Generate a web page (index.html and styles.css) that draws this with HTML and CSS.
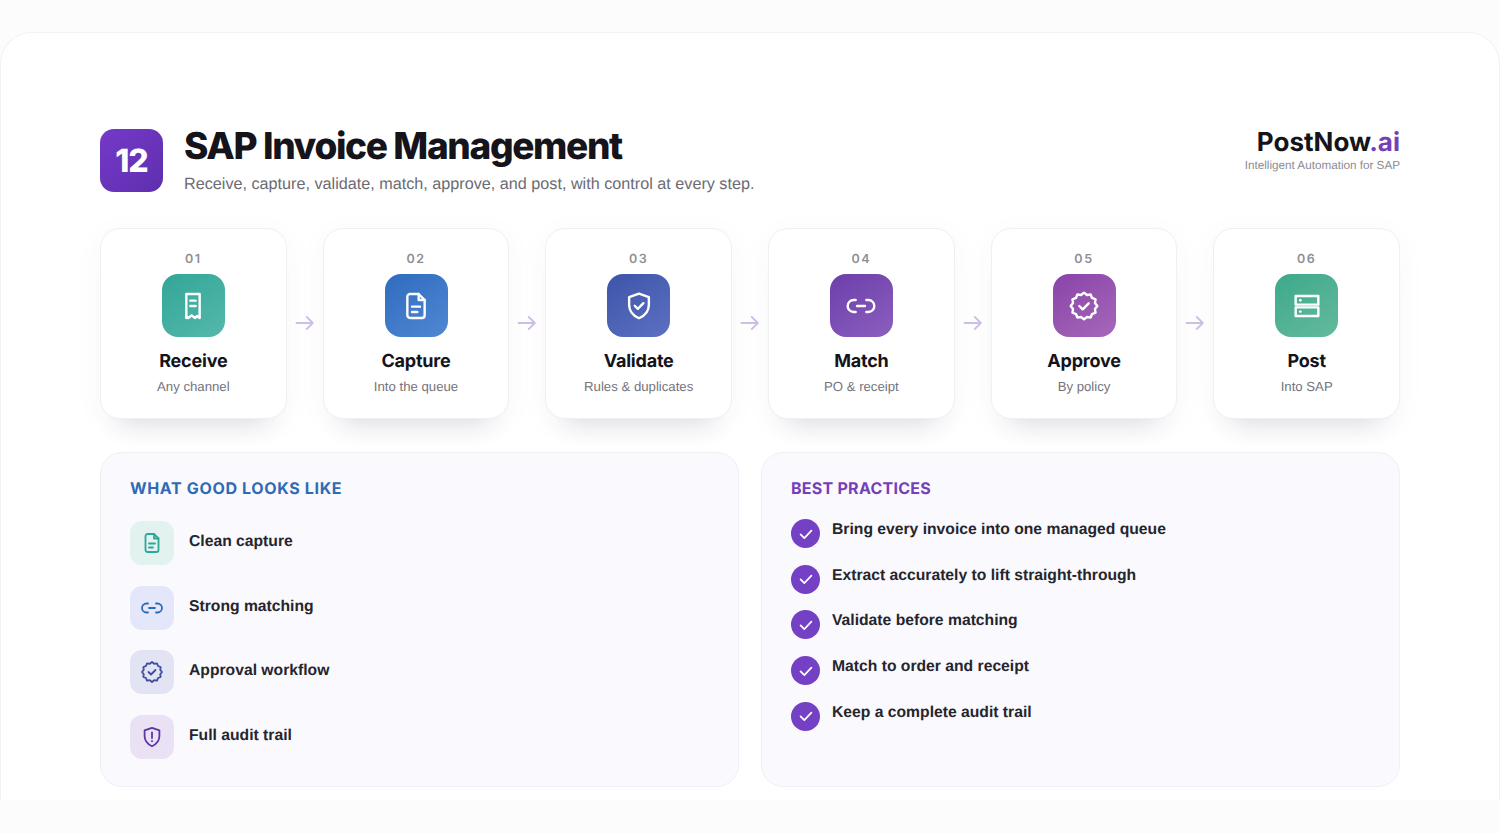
FILE: index.html
```html
<!DOCTYPE html>
<html lang="en">
<head>
  <meta charset="UTF-8">
  <title>SAP Invoice Management</title>
  <link rel="stylesheet" href="styles.css">
</head>
<body>

  <svg class="icon-defs" aria-hidden="true">
    <symbol id="i-receipt" viewBox="0 0 24 24">
      <path d="M7 3h10v18l-1.8-1.5-1.7 1.5-2.5-2-2.5 2-1.7-1.5L7 21Z"/>
      <path d="M10 8h4M10 12h4"/>
    </symbol>
    <symbol id="i-doc" viewBox="0 0 24 24">
      <path d="M7.5 3H14l4.500 4.500V19a2 2 0 0 1-2 2h-9a2 2 0 0 1-2-2V5a2 2 0 0 1 2-2Z"/>
      <path d="M14 3v4.500h4.500M9 12.500h6M9 16.500h4"/>
    </symbol>
    <symbol id="i-shield" viewBox="0 0 24 24">
      <path d="M12 2.800 19.400 5.400V11c0 5-3 8.200-7.400 10.200C7.600 19.200 4.600 16 4.600 11V5.400Z"/>
      <path d="m8.800 11.800 2.300 2.300 4.200-4.200"/>
    </symbol>
    <symbol id="i-alert" viewBox="0 0 24 24">
      <path d="M12 2.800 19.400 5.400V11c0 5-3 8.200-7.400 10.200C7.600 19.200 4.600 16 4.600 11V5.400Z"/>
      <path d="M12 7.500v5.500M12 16v.3"/>
    </symbol>
    <symbol id="i-link" viewBox="0 0 24 24">
      <path d="M8 16.500H6.500a4.500 4.500 0 0 1 0-9H8M16 7.500h1.500a4.500 4.500 0 0 1 0 9H16M9 12h6"/>
    </symbol>
    <symbol id="i-badge" viewBox="0 0 24 24">
      <path d="M22 12 20.210 14.200 20.660 17 18.010 18.010 17 20.660 14.200 20.210 12 22 9.800 20.210 7 20.660 5.990 18.010 3.340 17 3.790 14.200 2 12 3.790 9.800 3.340 7 5.990 5.990 7 3.340 9.800 3.790 12 2 14.200 3.790 17 3.340 18.010 5.990 20.660 7 20.210 9.800Z"/>
      <path d="m8.500 12 2.500 2.500 4.500-4.500"/>
    </symbol>
    <symbol id="i-server" viewBox="0 0 24 24">
      <rect x="3.500" y="4.500" width="17" height="6.500"/>
      <rect x="3.500" y="13" width="17" height="6.500"/>
      <path d="M6.800 7.700h.4M6.800 16.200h.4"/>
    </symbol>
    <symbol id="i-arrow" viewBox="0 0 18 14">
      <path d="M.5 7h16M10.800 1l6 6-6 6"/>
    </symbol>
    <symbol id="i-check" viewBox="0 0 24 24">
      <path d="m5.500 12.500 4.500 4.500 8.500-9"/>
    </symbol>
  </svg>

  <main class="sheet">

    <header class="top">
      <div class="chapter">12</div>
      <div class="heading">
        <h1>SAP Invoice Management</h1>
        <p>Receive, capture, validate, match, approve, and post, with control at every step.</p>
      </div>
      <div class="brand">
        <div class="brand-name">PostNow<span>.ai</span></div>
        <div class="brand-tag">Intelligent Automation for SAP</div>
      </div>
    </header>

    <section class="steps">
      <div class="step">
        <div class="step-num">01</div>
        <div class="tile teal"><svg><use href="#i-receipt"/></svg></div>
        <h3>Receive</h3>
        <p>Any channel</p>
      </div>
      <svg class="arrow"><use href="#i-arrow"/></svg>
      <div class="step">
        <div class="step-num">02</div>
        <div class="tile blue"><svg><use href="#i-doc"/></svg></div>
        <h3>Capture</h3>
        <p>Into the queue</p>
      </div>
      <svg class="arrow"><use href="#i-arrow"/></svg>
      <div class="step">
        <div class="step-num">03</div>
        <div class="tile indigo"><svg><use href="#i-shield"/></svg></div>
        <h3>Validate</h3>
        <p>Rules &amp; duplicates</p>
      </div>
      <svg class="arrow"><use href="#i-arrow"/></svg>
      <div class="step">
        <div class="step-num">04</div>
        <div class="tile purple"><svg><use href="#i-link"/></svg></div>
        <h3>Match</h3>
        <p>PO &amp; receipt</p>
      </div>
      <svg class="arrow"><use href="#i-arrow"/></svg>
      <div class="step">
        <div class="step-num">05</div>
        <div class="tile plum"><svg><use href="#i-badge"/></svg></div>
        <h3>Approve</h3>
        <p>By policy</p>
      </div>
      <svg class="arrow"><use href="#i-arrow"/></svg>
      <div class="step">
        <div class="step-num">06</div>
        <div class="tile green"><svg><use href="#i-server"/></svg></div>
        <h3>Post</h3>
        <p>Into SAP</p>
      </div>
    </section>

    <section class="panels">
      <div class="panel">
        <h2 class="good-title">WHAT GOOD LOOKS LIKE</h2>
        <ul class="good-list">
          <li><span class="mini mini-teal"><svg><use href="#i-doc"/></svg></span><span class="good-label">Clean capture</span></li>
          <li><span class="mini mini-blue"><svg><use href="#i-link"/></svg></span><span class="good-label">Strong matching</span></li>
          <li><span class="mini mini-indigo"><svg><use href="#i-badge"/></svg></span><span class="good-label">Approval workflow</span></li>
          <li><span class="mini mini-purple"><svg><use href="#i-alert"/></svg></span><span class="good-label">Full audit trail</span></li>
        </ul>
      </div>
      <div class="panel">
        <h2 class="best-title">BEST PRACTICES</h2>
        <ul class="best-list">
          <li><span class="tick"><svg><use href="#i-check"/></svg></span><span class="best-label">Bring every invoice into one managed queue</span></li>
          <li><span class="tick"><svg><use href="#i-check"/></svg></span><span class="best-label">Extract accurately to lift straight-through</span></li>
          <li><span class="tick"><svg><use href="#i-check"/></svg></span><span class="best-label">Validate before matching</span></li>
          <li><span class="tick"><svg><use href="#i-check"/></svg></span><span class="best-label">Match to order and receipt</span></li>
          <li><span class="tick"><svg><use href="#i-check"/></svg></span><span class="best-label">Keep a complete audit trail</span></li>
        </ul>
      </div>
    </section>

  </main>

</body>
</html>
```

FILE: styles.css
```css
* {
  box-sizing: border-box;
}

html, body {
  height: 833px;
  overflow: hidden;
}

body {
  margin: 0;
  padding-top: 32px;
  background-color: #fcfcfd;
  color: #16161c;
  font-family: 'Liberation Sans', Arial, sans-serif;
  text-rendering: geometricPrecision;
}

.icon-defs {
  display: none;
}

svg {
  fill: none;
  stroke: currentColor;
  stroke-linecap: round;
  stroke-linejoin: round;
}

.sheet {
  height: 768px;
  padding: 96px 99px 0;
  background: #fff;
  border: 1px solid #f2f1f5;
  border-bottom: none;
  border-radius: 32px 32px 0 0;
}

/* header */
.top {
  display: flex;
  align-items: flex-start;
  height: 99px;
}

.chapter {
  width: 63px;
  height: 63px;
  border-radius: 14px;
  background: linear-gradient(135deg, #7439c8, #5f2fae);
  color: #fff;
  font-family: Inter, sans-serif;
  font-size: 32px;
  font-weight: 800;
  letter-spacing: -1px;
  line-height: 63px;
  text-align: center;
}

.heading {
  margin-left: 21px;
  flex: 1;
}

.heading h1 {
  margin: -3px 0 0;
  font-family: Inter, sans-serif;
  font-size: 37px;
  font-weight: 800;
  letter-spacing: -1.350px;
  line-height: 40px;
  color: #14141a;
}

.heading p {
  margin: 8px 0 0;
  font-size: 16.200px;
  line-height: 20px;
  color: #6b6b73;
}

.brand {
  text-align: right;
}

.brand-name {
  margin-top: 1px;
  font-family: Inter, sans-serif;
  font-size: 26px;
  font-weight: 700;
  line-height: 26px;
  color: #14141a;
}

.brand-name span {
  color: #7440b8;
}

.brand-tag {
  margin-top: 3px;
  font-size: 11.700px;
  line-height: 14px;
  color: #8c8c94;
}

/* process steps */
.steps {
  display: flex;
  align-items: center;
}

.step {
  flex: 1;
  height: 191px;
  padding-top: 23px;
  background: #fff;
  border: 1px solid #f0eff4;
  border-radius: 20px;
  box-shadow: 0 24px 24px -20px rgba(60, 50, 90, 0.16), 0 6px 30px rgba(80, 70, 120, 0.04);
  text-align: center;
}

.step-num {
  font-family: Inter, sans-serif;
  font-size: 12.500px;
  font-weight: 600;
  letter-spacing: 1.600px;
  line-height: 15px;
  color: #8e8e96;
}

.tile {
  display: flex;
  align-items: center;
  justify-content: center;
  width: 63px;
  height: 63px;
  margin: 7px auto 0;
  border-radius: 16px;
  color: #fff;
}

.tile svg {
  width: 32px;
  height: 32px;
  stroke-width: 1.800;
}

.teal { background: linear-gradient(145deg, #32a698, #55b8ab); }
.blue { background: linear-gradient(145deg, #2f6cbf, #5087d2); }
.indigo { background: linear-gradient(145deg, #3c55a9, #5d70c2); }
.purple { background: linear-gradient(145deg, #6c3eab, #8b5fbe); }
.plum { background: linear-gradient(145deg, #8844a8, #a767ba); }
.green { background: linear-gradient(145deg, #3da98a, #65b99e); }

.step h3 {
  margin: 13px 0 0;
  font-family: Inter, sans-serif;
  font-size: 18px;
  font-weight: 700;
  letter-spacing: -0.200px;
  line-height: 24px;
  color: #14141a;
}

.step p {
  margin: 5px 0 0;
  font-size: 13.200px;
  line-height: 16px;
  color: #74747c;
}

.arrow {
  flex: 0 0 36px;
  width: 36px;
  height: 14px;
  margin-bottom: 2px;
  color: #cdbfe8;
  stroke-width: 1.800;
}

/* lower panels */
.panels {
  display: grid;
  grid-template-columns: 1fr 1fr;
  gap: 22px;
  margin-top: 33px;
}

.panel {
  height: 335px;
  padding: 26px 29px 0;
  background: #faf9fd;
  border: 1px solid #f0eff5;
  border-radius: 22px;
}

.panel h2 {
  margin: 0;
  font-family: Inter, sans-serif;
  font-size: 16px;
  font-weight: 700;
  line-height: 19px;
}

.good-title {
  color: #2f6ab4;
  letter-spacing: 0.650px;
}

.best-title {
  color: #7440b8;
  letter-spacing: 0.250px;
}

ul {
  margin: 0;
  padding: 0;
  list-style: none;
}

.good-list {
  display: flex;
  flex-direction: column;
  gap: 20.700px;
  margin-top: 23px;
}

.good-list li {
  display: flex;
  align-items: center;
  gap: 15px;
  font-size: 15.700px;
  font-weight: 700;
  color: #25252d;
}

.good-label {
  margin-top: -2px;
}

.mini {
  display: flex;
  align-items: center;
  justify-content: center;
  width: 44px;
  height: 44px;
  border-radius: 12px;
}

.mini svg {
  width: 24px;
  height: 24px;
  stroke-width: 1.800;
}

.mini-teal { background: #e1f2ef; color: #2ea897; }
.mini-blue { background: #e3e7f9; color: #2f6ab4; }
.mini-indigo { background: #e2e4f4; color: #3f4d9c; }
.mini-purple { background: #eae2f4; color: #5f35a0; }

.best-list {
  display: flex;
  flex-direction: column;
  gap: 16.700px;
  margin-top: 21px;
}

.best-list li {
  display: flex;
  align-items: flex-start;
  gap: 12px;
  font-size: 15.700px;
  font-weight: 700;
  line-height: 20px;
  color: #25252d;
}

.best-label {
  margin-top: 1px;
}

.tick {
  display: flex;
  align-items: center;
  justify-content: center;
  flex: 0 0 29px;
  width: 29px;
  height: 29px;
  border-radius: 50%;
  background: #7440c4;
  color: #fff;
}

.tick svg {
  width: 20px;
  height: 20px;
  stroke-width: 2.100;
}
```
